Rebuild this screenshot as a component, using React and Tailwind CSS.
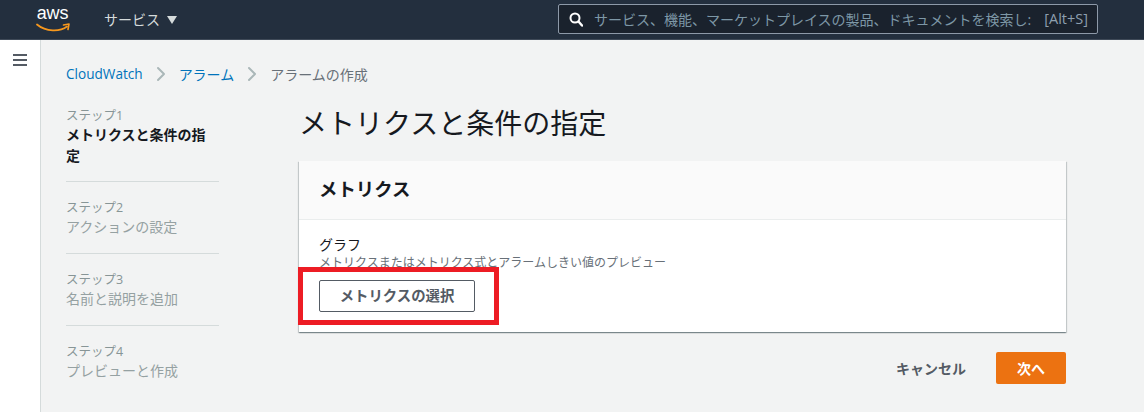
import { ChevronRight } from "lucide-react";

const font = { fontFamily: '"Open Sans", "Noto Sans CJK JP", sans-serif' };

const steps = [
  { no: "ステップ1", name: "メトリクスと条件の指定", active: true },
  { no: "ステップ2", name: "アクションの設定" },
  { no: "ステップ3", name: "名前と説明を追加" },
  { no: "ステップ4", name: "プレビューと作成" },
];

// top bar with logo, service menu and search
const Header = () => (
  <header className="h-10 shrink-0 bg-[#232f3e] border-b border-b-[#3f4a58] flex items-center text-white">
    <div className="ml-[36px] w-[36px] h-[32px] flex flex-col items-center relative">
      <span className="text-[18px] leading-[20px] font-['Liberation_Sans'] text-white -mt-[1px] -ml-[3px] tracking-[-0.2px]">aws</span>
      <svg width="36" height="12" viewBox="0 0 36 12" className="-mt-[1px]">
        <path d="M1 2.5 C10 10 24 10 31 4.5" fill="none" stroke="#f7981d" strokeWidth="1.8" strokeLinecap="round" />
        <path d="M27.5 3 L33 2 L32 7.5" fill="none" stroke="#f7981d" strokeWidth="1.6" strokeLinejoin="round" strokeLinecap="round" />
      </svg>
    </div>
    <div className="ml-[32px] flex items-center text-[14px] leading-5 text-[#d5dbdb]">
      サービス
      <span className="ml-[7px] w-0 h-0 border-l-[5px] border-r-[5px] border-t-[8px] border-l-transparent border-r-transparent border-t-[#d5dbdb]" />
    </div>
    <div className="ml-auto mr-[46px] w-[540px] h-[30px] -mt-[1px] bg-[#1a222d] border border-[#8d99a8] rounded-[2px] flex items-center pl-[10px] pr-[9px]">
      <svg width="14" height="15" viewBox="0 0 14 15" className="shrink-0">
        <circle cx="6" cy="6" r="4.5" fill="none" stroke="#fff" strokeWidth="2" />
        <path d="M9.5 9.5 L13 13.5" stroke="#fff" strokeWidth="2.4" strokeLinecap="round" />
      </svg>
      <span className="ml-[11px] whitespace-nowrap text-[14px] text-[#7d97a6]">
        サービス、機能、マーケットプレイスの製品、ドキュメントを検索し:
      </span>
      <span className="ml-auto text-[#8d9fae] text-[14.5px]">[Alt+S]</span>
    </div>
  </header>
);

const Stepper = () => (
  <ol className="w-[153px] shrink-0 text-[14px] leading-[20px]">
    {steps.map((s, i) => (
      <li key={s.no} className={i < 3 ? `border-b border-[#d5dbdb] mb-[17px] ${s.active ? "pb-[15px]" : "pb-[16px]"}` : ""}>
        <div className="text-[#879596] text-[12.5px] leading-[17px]">{s.no}</div>
        <div className={s.active ? "font-bold text-[#16191f] leading-[21px]" : "text-[#95a1a2] mt-[1px]"}>{s.name}</div>
      </li>
    ))}
  </ol>
);

export default function App() {
  return (
    <div style={font} className="w-[1144px] h-[412px] overflow-hidden flex flex-col bg-[#f2f3f3] relative">
      <Header />
      <div className="flex flex-1 min-h-0">
        <aside className="w-[41px] shrink-0 bg-white border-r border-[#d5dbdb] pl-[13px] pt-[14px]">
          <div className="w-[14px] flex flex-col gap-[3px]">
            <span className="h-[2px] bg-[#545b64]" />
            <span className="h-[2px] bg-[#545b64]" />
            <span className="h-[2px] bg-[#545b64]" />
          </div>
        </aside>
        <main className="flex-1 pl-[25px] pt-[24px]">
          <nav className="flex items-center h-5 text-[14px] text-[#0073bb]">
            <span className="text-[13.6px]">CloudWatch</span>
            <ChevronRight size={24} strokeWidth={2} className="text-[#aab7b8] mx-[6px]" />
            アラーム
            <ChevronRight size={24} strokeWidth={2} className="text-[#aab7b8] mx-[6px]" />
            <span className="text-[#687078]">アラームの作成</span>
          </nav>
          <div className="flex mt-[23px]">
            <Stepper />
            <div className="ml-[80px] w-[767px]">
              <h1 className="text-[28px] leading-[36px] text-[#16191f] -mt-[2px]">メトリクスと条件の指定</h1>
              <section className="mt-[20px] h-[171px] bg-white shadow-[0_1px_1px_0_rgba(0,28,36,0.3),1px_1px_1px_0_rgba(0,28,36,0.15),-1px_1px_1px_0_rgba(0,28,36,0.15)]">
                <div className="h-[59px] bg-[#fafafa] border-b border-[#eaeded] px-[20px] pb-[2px] flex items-center">
                  <h2 className="text-[18.4px] font-bold text-[#16191f]">メトリクス</h2>
                </div>
                <div className="px-[20px] pt-[15px]">
                  <div className="text-[14px] leading-[20px] text-[#16191f]">グラフ</div>
                  <div className="text-[12px] leading-[14px] mt-[1px] text-[#687078]">メトリクスまたはメトリクス式とアラームしきい値のプレビュー</div>
                  <button className="mt-[10px] w-[156px] h-[32px] bg-white border border-[#545b64] rounded-[2px] text-[14.4px] font-bold text-[#545b64]">
                    メトリクスの選択
                  </button>
                </div>
              </section>
              <div className="mt-[20px] flex justify-end items-center">
                <button className="text-[14px] font-bold text-[#545b64] mr-[30px]">キャンセル</button>
                <button className="w-[70px] h-[32px] bg-[#ec7211] rounded-[2px] text-[14px] font-bold text-white">次へ</button>
              </div>
            </div>
          </div>
        </main>
      </div>
      {/* red annotation around the button */}
      <div className="absolute left-[298px] top-[267px] w-[201px] h-[58px] border-[5px] border-[#ed1c24]" />
    </div>
  );
}
